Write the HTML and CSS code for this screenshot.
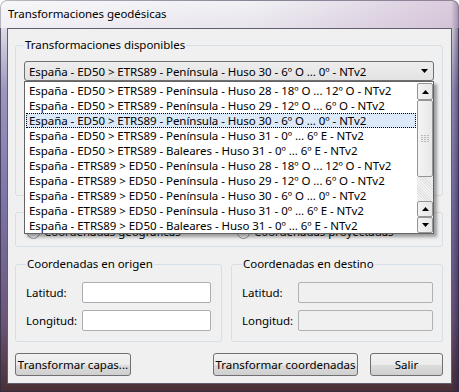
FILE: index.html
```html
<!DOCTYPE html>
<html lang="es">
<head>
    <meta charset="UTF-8">
    <meta name="viewport" content="width=device-width, initial-scale=1.0">
    <title>Transformaciones geodésicas</title>
    <link rel="stylesheet" href="styles.css">
</head>
<body>
    <div class="ventana">
        <div class="titulo">Transformaciones geodésicas</div>
        <div class="cliente">
            <fieldset class="grupo grupo-trans">
                <legend>Transformaciones disponibles</legend>
                <div class="combo-wrap">
                    <div class="combo">
                        <span class="combo-texto">España - ED50 &gt; ETRS89 - Península - Huso 30 - 6º O ... 0º - NTv2</span>
                        <span class="combo-flecha">
                            <svg width="7" height="4" viewBox="0 0 7 4"><path d="M0 0h7L3.5 4z" fill="#000"/></svg>
                        </span>
                    </div>
                    <div class="lista">
                        <div class="items">
                            <div class="item">España - ED50 &gt; ETRS89 - Península - Huso 28 - 18º O ... 12º O - NTv2</div>
                            <div class="item">España - ED50 &gt; ETRS89 - Península - Huso 29 - 12º O ... 6º O - NTv2</div>
                            <div class="item sel">España - ED50 &gt; ETRS89 - Península - Huso 30 - 6º O ... 0º - NTv2</div>
                            <div class="item">España - ED50 &gt; ETRS89 - Península - Huso 31 - 0º ... 6º E - NTv2</div>
                            <div class="item">España - ED50 &gt; ETRS89 - Baleares - Huso 31 - 0º ... 6º E - NTv2</div>
                            <div class="item">España - ETRS89 &gt; ED50 - Península - Huso 28 - 18º O ... 12º O - NTv2</div>
                            <div class="item">España - ETRS89 &gt; ED50 - Península - Huso 29 - 12º O ... 6º O - NTv2</div>
                            <div class="item">España - ETRS89 &gt; ED50 - Península - Huso 30 - 6º O ... 0º - NTv2</div>
                            <div class="item">España - ETRS89 &gt; ED50 - Península - Huso 31 - 0º ... 6º E - NTv2</div>
                            <div class="item">España - ETRS89 &gt; ED50 - Baleares - Huso 31 - 0º ... 6º E - NTv2</div>
                        </div>
                        <div class="scroll">
                            <div class="sb-btn sb-up">
                                <svg width="7" height="4" viewBox="0 0 7 4"><path d="M0 4h7L3.5 0z" fill="#000"/></svg>
                            </div>
                            <div class="sb-thumb">
                                <svg width="8" height="8" viewBox="0 0 8 8" fill="#b9b9b9">
                                    <rect x="0" y="0" width="2" height="1"/><rect x="3" y="0" width="2" height="1"/><rect x="6" y="0" width="2" height="1"/>
                                    <rect x="0" y="2" width="2" height="1"/><rect x="3" y="2" width="2" height="1"/><rect x="6" y="2" width="2" height="1"/>
                                    <rect x="0" y="4" width="2" height="1"/><rect x="3" y="4" width="2" height="1"/><rect x="6" y="4" width="2" height="1"/>
                                    <rect x="0" y="6" width="2" height="1"/><rect x="3" y="6" width="2" height="1"/><rect x="6" y="6" width="2" height="1"/>
                                </svg>
                            </div>
                            <div class="sb-track"></div>
                            <div class="sb-btn sb-up2">
                                <svg width="7" height="4" viewBox="0 0 7 4"><path d="M0 4h7L3.5 0z" fill="#000"/></svg>
                            </div>
                            <div class="sb-btn sb-down">
                                <svg width="7" height="4" viewBox="0 0 7 4"><path d="M0 0h7L3.5 4z" fill="#000"/></svg>
                            </div>
                        </div>
                    </div>
                </div>
                <div class="descripcion"></div>
            </fieldset>

            <fieldset class="grupo grupo-sistema">
                <div class="radios">
                    <label class="radio"><span class="circulo"></span>Coordenadas geográficas</label>
                    <label class="radio"><span class="circulo"></span>Coordenadas proyectadas</label>
                </div>
            </fieldset>

            <div class="fila-coords">
                <fieldset class="grupo grupo-origen">
                    <legend>Coordenadas en origen</legend>
                    <div class="campos">
                        <label>Latitud:</label>
                        <input type="text" class="caja">
                        <label>Longitud:</label>
                        <input type="text" class="caja">
                    </div>
                </fieldset>
                <fieldset class="grupo grupo-destino">
                    <legend>Coordenadas en destino</legend>
                    <div class="campos">
                        <label>Latitud:</label>
                        <input type="text" class="caja" disabled>
                        <label>Longitud:</label>
                        <input type="text" class="caja" disabled>
                    </div>
                </fieldset>
            </div>

            <div class="botones">
                <button class="btn btn-capas">Transformar capas...</button>
                <button class="btn btn-coords">Transformar coordenadas</button>
                <button class="btn btn-salir">Salir</button>
            </div>
        </div>
    </div>
</body>
</html>
```

FILE: styles.css
```css
* {
    box-sizing: border-box;
}
body {
    margin: 0;
    font-family: "Noto Sans", sans-serif;
    font-size: 11.5px;
    letter-spacing: -0.05px;
    color: #000;
}
.ventana {
    width: 459px;
    height: 392px;
    display: flex;
    flex-direction: column;
    border-radius: 7px 7px 0 0;
    box-shadow: inset 0 0 0 1px rgba(50, 45, 70, 0.75);
    background:
        linear-gradient(90deg, rgba(0, 0, 0, 0) 451px, rgba(40, 28, 70, 0.55) 459px),
        linear-gradient(180deg, #eceef2 0px, #e0dbe6 28px, #9e96bf 90px, #7d74a8 200px, #6b5679 320px, #4a2f34 392px);
}
.titulo {
    height: 28px;
    padding: 6px 0 0 8px;
    line-height: 16px;
    border-radius: 7px 7px 0 0;
    background: linear-gradient(90deg, rgba(255, 255, 255, 0.55), rgba(255, 255, 255, 0.25) 55%, rgba(200, 170, 200, 0.5));
}
.cliente {
    flex: 1;
    margin: 0 7px 8px 7px;
    border: 1px solid #5f5d6e;
    background: #f0f0f0;
    padding: 8px 8px 0 7px;
    display: flex;
    flex-direction: column;
}
.grupo {
    margin: 0;
    padding: 8px;
    min-width: 0;
    border: 1px solid #d5dfe5;
    border-radius: 3px;
}
.grupo legend {
    padding: 0 1px;
    line-height: 16px;
}

/* combo y lista desplegada */
.combo-wrap {
    position: relative;
}
.combo {
    height: 20px;
    display: flex;
    align-items: center;
    border: 1px solid #707070;
    border-radius: 3px;
    background: linear-gradient(#ededed, #e3e3e3);
}
.combo-texto {
    flex: 1;
    padding-left: 4px;
    white-space: nowrap;
    overflow: hidden;
}
.combo-flecha {
    width: 13px;
    height: 18px;
    display: flex;
    align-items: center;
    justify-content: center;
    margin-right: 2px;
}
.descripcion {
    height: 106px;
}
.lista {
    position: absolute;
    top: 100%;
    left: 0;
    width: 410px;
    height: 153px;
    display: flex;
    background: #fff;
    border: 1px solid #646464;
    box-shadow: 3px 3px 3px rgba(0, 0, 0, 0.35);
    z-index: 2;
}
.items {
    flex: 1;
    padding: 1px 1px 0 1px;
}
.item {
    height: 15px;
    line-height: 15px;
    padding-left: 3px;
    white-space: nowrap;
    overflow: hidden;
}
.item.sel {
    background: #dce9f8;
    border: 1px dotted #000;
    line-height: 13px;
    padding-left: 2px;
}
.scroll {
    width: 16px;
    padding-top: 1px;
    display: flex;
    flex-direction: column;
}
.sb-btn {
    display: flex;
    align-items: center;
    justify-content: center;
    border: 1px solid #959595;
    border-radius: 2px;
    background: linear-gradient(90deg, #f3f3f3, #e6e6e6);
}
.sb-up {
    height: 17px;
}
.sb-up2,
.sb-down {
    height: 16px;
}
.sb-thumb {
    height: 77px;
    display: flex;
    align-items: center;
    justify-content: center;
    border: 1px solid #959595;
    border-radius: 2px;
    background: linear-gradient(90deg, #f4f4f4, #e8e8e8);
}
.sb-track {
    height: 24px;
    background: repeating-linear-gradient(45deg, #f2f2f2 0 1px, #e2e2e2 1px 2px);
}

/* sistema de coordenadas */
.grupo-sistema {
    margin-top: 16px;
    padding: 11px 8px 6px 8px;
}
.radios {
    display: grid;
    grid-template-columns: 210px 1fr;
    padding-left: 3px;
}
.radio {
    display: flex;
    align-items: center;
    gap: 4px;
    line-height: 16px;
}
.circulo {
    width: 13px;
    height: 13px;
    border: 1px solid #8e8f8f;
    border-radius: 50%;
    background: radial-gradient(circle, #e6e6e6 30%, #f8f8f8 70%);
}

/* coordenadas */
.fila-coords {
    display: flex;
    gap: 9px;
    margin-top: 9px;
}
.grupo-origen {
    width: 207px;
    padding: 10px;
}
.grupo-destino {
    flex: 1;
    padding: 10px 9px 10px 10px;
}
.campos {
    display: grid;
    grid-template-columns: 56px 1fr;
    row-gap: 7px;
    align-items: center;
}
.caja {
    height: 21px;
    width: 100%;
    margin: 0;
    padding: 0 3px;
    font: inherit;
    border: 1px solid #abadb3;
    border-radius: 2px;
    background: #fff;
}
.caja:disabled {
    background: #f0f0f0;
    border-color: #adb2b5;
}

/* botones */
.botones {
    display: flex;
    margin-top: 11px;
}
.btn {
    height: 23px;
    padding: 0;
    font: inherit;
    color: #000;
    white-space: nowrap;
    border: 1px solid #707070;
    border-radius: 3px;
    background: linear-gradient(#f2f2f2 0%, #ebebeb 50%, #dddddd 50%, #cfcfcf 100%);
}
.btn-capas {
    width: 116px;
}
.btn-coords {
    width: 145px;
    margin-left: auto;
}
.btn-salir {
    width: 73px;
    margin-left: 12px;
}
```
